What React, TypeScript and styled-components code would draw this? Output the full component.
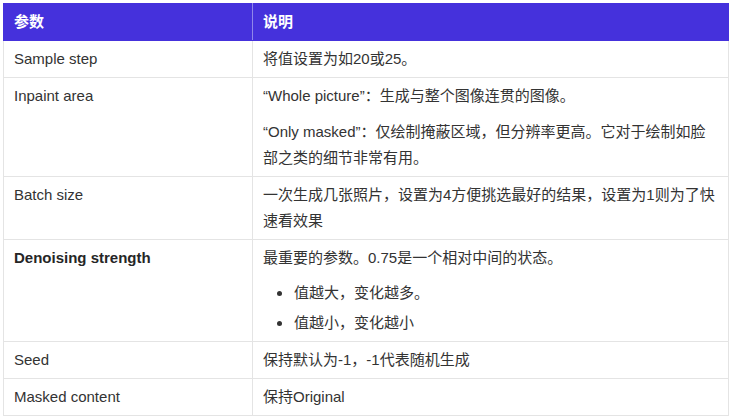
import { ReactNode } from "react";
import styled, { createGlobalStyle } from "styled-components";

const GlobalStyle = createGlobalStyle`
  html, body {
    margin: 0;
    padding: 0;
    background: #ffffff;
  }
  body {
    font-family: "Liberation Sans", "Noto Sans CJK SC", sans-serif;
    color: #333333;
  }
`;

const Page = styled.div`
  padding: 3px;
`;

const Table = styled.table`
  width: 726px;
  border-collapse: collapse;
  table-layout: fixed;
  font-size: 15px;
  line-height: 26px;
`;

const HeadCell = styled.th<{ $width?: number }>`
  width: ${(p) => (p.$width ? `${p.$width}px` : "auto")};
  background: #4531dc;
  color: #ffffff;
  font-weight: 700;
  text-align: left;
  padding: 5px 10px;
  border: 1px solid #4531dc;
  border-right-color: #8f86ea;
  &:last-child {
    border-right-color: #4531dc;
  }
`;

const Cell = styled.td<{ $bold?: boolean }>`
  vertical-align: top;
  padding: 5px 10px;
  border: 1px solid #e4e4e4;
  font-weight: ${(p) => (p.$bold ? 600 : 400)};
  color: ${(p) => (p.$bold ? "#262626" : "#333333")};
`;

const Para = styled.p`
  margin: 0;
  & + & {
    margin-top: 10px;
  }
`;

const List = styled.ul`
  list-style: none;
  margin: 9px 0 0;
  padding: 0 0 0 31px;
  display: flex;
  flex-direction: column;
  gap: 4px;
`;

const Item = styled.li`
  position: relative;
  &::before {
    content: "";
    position: absolute;
    left: -17px;
    top: 11px;
    width: 5px;
    height: 5px;
    border-radius: 50%;
    background: #333333;
  }
`;

const Row = ({
  label,
  bold,
  children,
}: {
  label: string;
  bold?: boolean;
  children: ReactNode;
}) => (
  <tr>
    <Cell $bold={bold}>{label}</Cell>
    <Cell>{children}</Cell>
  </tr>
);

export default function App() {
  return (
    <Page>
      <GlobalStyle />
      <Table>
        <thead>
          <tr>
            <HeadCell $width={228}>参数</HeadCell>
            <HeadCell>说明</HeadCell>
          </tr>
        </thead>
        <tbody>
          <Row label="Sample step">将值设置为如20或25。</Row>
          <Row label="Inpaint area">
            <Para>“Whole picture”：生成与整个图像连贯的图像。</Para>
            <Para>
              “Only masked”：仅绘制掩蔽区域，但分辨率更高。它对于绘制如脸部之类的细节非常有用。
            </Para>
          </Row>
          <Row label="Batch size">
            一次生成几张照片，设置为4方便挑选最好的结果，设置为1则为了快速看效果
          </Row>
          <Row label="Denoising strength" bold>
            <Para>最重要的参数。0.75是一个相对中间的状态。</Para>
            <List>
              <Item>值越大，变化越多。</Item>
              <Item>值越小，变化越小</Item>
            </List>
          </Row>
          <Row label="Seed">保持默认为-1，-1代表随机生成</Row>
          <Row label="Masked content">保持Original</Row>
        </tbody>
      </Table>
    </Page>
  );
}
